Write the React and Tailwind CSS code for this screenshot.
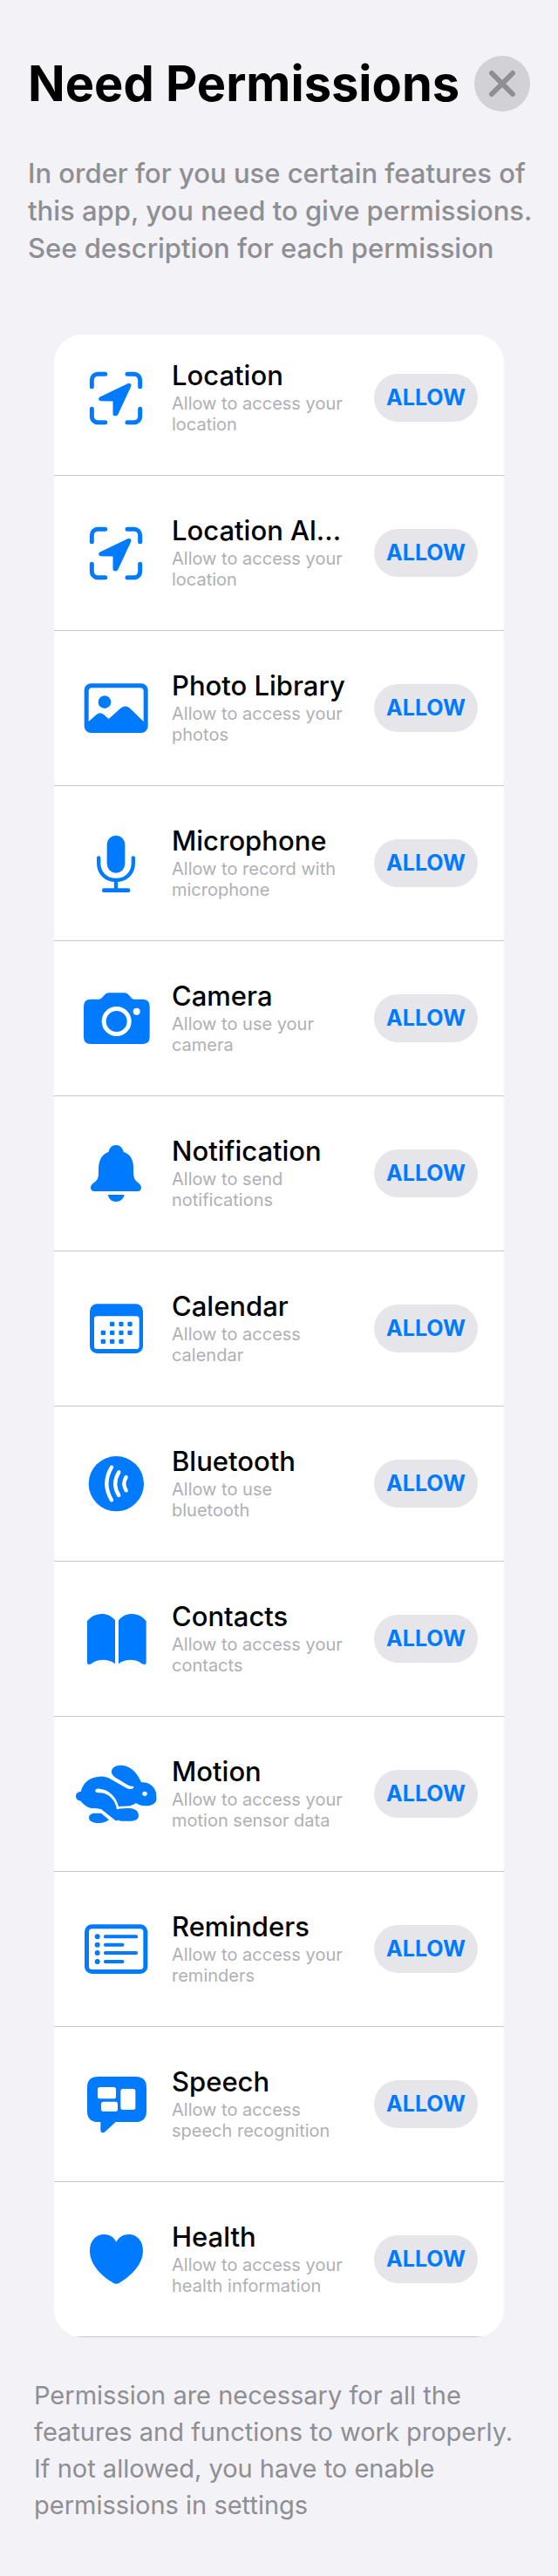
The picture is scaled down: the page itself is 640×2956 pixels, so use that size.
import React from "react";

function Icon({ top, children }) {
  return (
    <svg
      viewBox={`3 ${top} 312 249`}
      className="h-[83px] w-[104px] shrink-0 text-[#007aff]"
      fill="currentColor"
      aria-hidden="true"
    >
      {children}
    </svg>
  );
}

const LocationIcon = () => (
  <Icon top={0}>
    <g transform="translate(3 0)">
      <path
        d="M119 43H93a20 20 0 0 0-20 20v23M195 43h24a20 20 0 0 1 20 20v23M119 209H93a20 20 0 0 1-20-20v-26M195 209h24a20 20 0 0 0 20-20v-26"
        fill="none"
        stroke="currentColor"
        strokeWidth="15"
        strokeLinecap="round"
      />
      <path
        d="M104 128L201 82L156 179H153V129Z"
        stroke="currentColor"
        strokeWidth="15"
        strokeLinejoin="round"
      />
    </g>
  </Icon>
);

const PhotoIcon = () => (
  <Icon top={0}>
    <g transform="translate(3 0)">
      <path
        fillRule="evenodd"
        d="M70 40H243a23 23 0 0 1 23 23V187a23 23 0 0 1-23 23H70a23 23 0 0 1-23-23V63a23 23 0 0 1 23-23ZM62 67V171L89 147Q101 136 114 147L131 162L172 125Q188 112 204 125L251 171V67Q251 55 239 55H74Q62 55 62 67Z"
      />
      <circle cx="117" cy="104" r="22" />
    </g>
  </Icon>
);

const MicIcon = () => (
  <Icon top={0}>
    <g transform="translate(3 0)">
      <rect x="125" y="29" width="62" height="129" rx="31" />
      <path
        d="M96.500 106V123C96.500 159 121 183 156 183S215.500 159 215.500 123V106M156 183V217"
        fill="none"
        stroke="currentColor"
        strokeWidth="13"
        strokeLinecap="round"
      />
      <rect x="108" y="211" width="97" height="14" rx="6" />
    </g>
  </Icon>
);

const CameraIcon = () => (
  <Icon top={51}>
    <path d="M72 110H98C104 110 107 108 111 104L120 95C125 90 129 88 136 88H187C194 88 198 90 203 95L211 104C215 108 218 110 224 110H250Q275 110 275 134V240Q275 264 250 264H72Q48 264 48 240V134Q48 110 72 110Z" />
    <circle cx="161" cy="186" r="43.500" fill="none" stroke="white" strokeWidth="15" />
    <circle cx="230" cy="152" r="12" fill="white" />
  </Icon>
);

const BellIcon = () => (
  <Icon top={45}>
    <path d="M134 95C136 82 145 72 159 72S182 82 185 95C209 103 219 122 219 150C219 170 219 181 225 191C232 202 246 205 246 219C246 227 241 231 232 231H86C77 231 72 227 72 219C72 205 86 202 94 191C100 181 99 170 99 150C101 122 111 103 134 95Z" />
    <path d="M131 243H188C184 259 173 267 159 267S135 259 131 243Z" />
  </Icon>
);

const calendarDots = [
  [146, 148], [177, 148], [207, 148],
  [115, 178], [146, 178], [177, 178], [207, 178],
  [115, 208], [146, 208], [177, 208],
];

const CalendarIcon = () => (
  <Icon top={39}>
    <rect x="69" y="79" width="183" height="170" rx="25" />
    <rect x="84" y="121" width="155" height="113" rx="10" fill="white" />
    {calendarDots.map(([x, y]) => (
      <rect key={`${x}-${y}`} x={x - 8} y={y - 8} width="16" height="16" rx="4" />
    ))}
  </Icon>
);

const WavesIcon = () => (
  <Icon top={573}>
    <circle cx="160" cy="698" r="95" />
    <path
      d="M144 641Q110 698 144 754M169 658Q144 698 169 738M194 675Q180 698 194 721"
      fill="none"
      stroke="white"
      strokeWidth="13"
      strokeLinecap="round"
    />
  </Icon>
);

const BookIcon = () => (
  <Icon top={27}>
    <path d="M60 91C84 58 134 58 156 88V238C136 221 98 219 75 237Q60 245 60 233Z" />
    <path d="M263 91C240 58 190 58 168 88V238C188 221 225 219 248 237Q263 245 263 233Z" />
  </Icon>
);

const RabbitIcon = () => (
  <Icon top={21}>
    <path d="M21 154C21 145 27 138 38 138C45 108 68 87 103 86C121 85 132 90 143 96L196 126C206 132 222 129 220 120C204 121 186 105 167 95C153 88 142 79 144 66C147 53 160 47 177 47C212 48 232 75 246 106C273 103 297 122 298 150V168C294 181 278 187 261 187C247 187 237 183 227 177C221 184 214 183 208 187C194 189 181 187 168 189C161 157 135 130 104 128C93 127 87 130 88 136C89 142 96 142 106 142C137 144 158 170 162 199C174 195 190 195 207 195C224 196 237 204 237 221C236 235 222 239 205 239H177C170 237 165 234 158 238L109 199C98 194 86 197 72 194C55 190 44 178 38 170C27 169 21 163 21 154Z" />
    <path d="M87 212H108L135 235C124 243 115 246 101 246C83 246 66 240 66 228C66 217 75 212 87 212Z" />
    <circle cx="258" cy="145" r="8" fill="white" />
  </Icon>
);

const ListIcon = () => (
  <Icon top={15}>
    <rect x="58.500" y="62.500" width="202" height="155" rx="18" fill="none" stroke="currentColor" strokeWidth="15" />
    {[97, 125, 153, 183].map((y, i) => (
      <g key={y}>
        <circle cx="95" cy={y} r="9" />
        <rect x="117" y={y - 6} width={i % 2 ? 70 : 117} height="12" rx="5" />
      </g>
    ))}
  </Icon>
);

const SpeechIcon = () => (
  <Icon top={549}>
    <path d="M98 579H226Q264 579 264 616V698Q264 735 226 735H158L123 767C116 774 106 773 106 763V735H98Q60 735 60 698V616Q60 579 98 579Z" />
    <rect x="96" y="615" width="63" height="40" rx="8" fill="white" />
    <rect x="108" y="665" width="57" height="34" rx="8" fill="white" />
    <rect x="175" y="621" width="51" height="72" rx="8" fill="white" />
  </Icon>
);

const HeartIcon = () => (
  <Icon top={0}>
    <g transform="translate(3 0)">
      <path d="M157 65C149 48 134 39 115 39C86 39 66 62 66 95C66 139 100 176 140 202C153 212 161 212 174 202C214 176 249 139 249 95C249 62 229 39 200 39C181 39 166 48 157 65Z" />
    </g>
  </Icon>
);

const permissions = [
  { title: "Location", text: "Allow to access your location", icon: LocationIcon },
  { title: "Location Al...", text: "Allow to access your location", icon: LocationIcon },
  { title: "Photo Library", text: "Allow to access your photos", icon: PhotoIcon },
  { title: "Microphone", text: "Allow to record with microphone", icon: MicIcon },
  { title: "Camera", text: "Allow to use your camera", icon: CameraIcon },
  { title: "Notification", text: "Allow to send notifications", icon: BellIcon },
  { title: "Calendar", text: "Allow to access calendar", icon: CalendarIcon },
  { title: "Bluetooth", text: "Allow to use bluetooth", icon: WavesIcon },
  { title: "Contacts", text: "Allow to access your contacts", icon: BookIcon },
  { title: "Motion", text: "Allow to access your motion sensor data", icon: RabbitIcon },
  { title: "Reminders", text: "Allow to access your reminders", icon: ListIcon },
  { title: "Speech", text: "Allow to access speech recognition", icon: SpeechIcon },
  { title: "Health", text: "Allow to access your health information", icon: HeartIcon },
];

function PermissionRow({ title, text, icon: Glyph }) {
  return (
    <li className="flex h-[178px] items-center border-b border-[#c6c6c8] pl-[19px] pr-[30px] first:h-[162px] first:pb-4">
      <Glyph />
      <div className="mr-7 ml-3 min-w-0 flex-1">
        <h2 className="mb-[3px] text-[31px] leading-[34px] font-medium whitespace-nowrap text-black">{title}</h2>
        <p className="min-h-12 text-[20px] leading-6 text-[#b0b0b4]">{text}</p>
      </div>
      <button
        type="button"
        aria-label={`Allow ${title}`}
        className="h-[55px] w-[119px] shrink-0 rounded-full bg-[#e5e5ea] text-[25px] font-bold text-[#007aff]"
      >
        ALLOW
      </button>
    </li>
  );
}

export default function App() {
  return (
    <main className="min-h-screen bg-[#f2f2f7] pt-16 pb-[60px] font-['Inter','Liberation_Sans',sans-serif]">
      <header>
        <div className="flex items-center justify-between px-8">
          <h1 className="text-[56px] leading-[64px] font-bold whitespace-nowrap text-black">Need Permissions</h1>
          <button
            type="button"
            aria-label="Close"
            className="flex size-16 shrink-0 items-center justify-center rounded-full bg-[#d1d1d6] text-[#8e8e93]"
          >
            <svg viewBox="0 0 32 32" className="size-8" fill="none" stroke="currentColor" strokeWidth="6" strokeLinecap="round" aria-hidden="true">
              <path d="M4 4L28 28M28 4L4 28" />
            </svg>
          </button>
        </div>
        <p className="mt-[49px] pr-6 pl-8 text-[31px] leading-[43px] font-medium text-[#8e8e93]">
          In order for you use certain features of this app, you need to give permissions. See description for each permission
        </p>
      </header>
      <ul className="mx-[62px] mt-[78px] overflow-hidden rounded-[32px] bg-white">
        {permissions.map((item) => (
          <PermissionRow key={item.title} {...item} />
        ))}
      </ul>
      <p className="mt-[46px] pr-8 pl-[39px] text-[29px] leading-[42px] text-[#8e8e93]">
        Permission are necessary for all the features and functions to work properly. If not allowed, you have to enable permissions in settings
      </p>
    </main>
  );
}
